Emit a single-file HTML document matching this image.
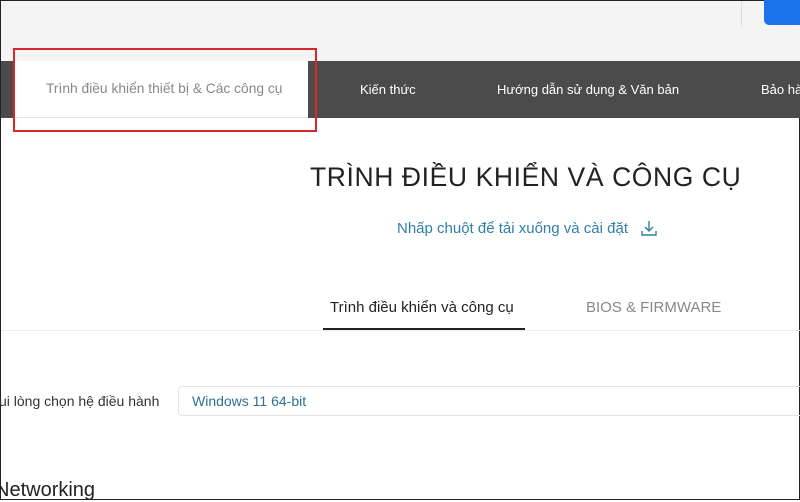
<!DOCTYPE html>
<html><head><meta charset="utf-8"><style>
*{margin:0;padding:0;box-sizing:border-box}
body{width:800px;height:500px;overflow:hidden;background:#fff;font-family:"Liberation Sans","DejaVu Sans",sans-serif;position:relative;border:1px solid #222}
.abs{position:absolute;white-space:nowrap}
</style></head><body>
<div class="abs" style="left:0;top:0;width:800px;height:60px;background:#f4f4f4"></div>
<div class="abs" style="left:740px;top:0;width:1px;height:25px;background:#ddd"></div>
<div class="abs" style="left:763px;top:-6px;width:40px;height:30px;background:#1a73e8;border-radius:5px"></div>
<div class="abs" style="left:0;top:60px;width:800px;height:57px;background:#4b4b4b"></div>
<div class="abs" style="left:12px;top:60px;width:295px;height:57px;background:#fff;border-bottom:1px solid #e6e6e6"></div>
<div class="abs" style="left:12px;top:47px;width:304px;height:84px;border:2px solid #d62828"></div>
<div class="abs" style="left:45px;top:80px;font-size:13.8px;color:#888">Trình điều khiển thiết bị &amp; Các công cụ</div>
<div class="abs" style="left:359px;top:81px;font-size:13px;color:#fff">Kiến thức</div>
<div class="abs" style="left:496px;top:81px;font-size:13px;color:#fff">Hướng dẫn sử dụng &amp; Văn bản</div>
<div class="abs" style="left:760px;top:81px;font-size:13px;color:#fff">Bảo hà</div>
<div class="abs" style="left:309px;top:161px;font-size:26.5px;color:#222;font-weight:300;letter-spacing:0.6px">TRÌNH ĐIỀU KHIỂN VÀ CÔNG CỤ</div>
<div class="abs" style="left:396px;top:219px;font-size:15px;color:#2f7fa8">Nhấp chuột để tải xuống và cài đặt</div>
<svg class="abs" style="left:639px;top:218px" width="18" height="18" viewBox="0 0 18 18" fill="none" stroke="#2f7fa8" stroke-width="1.4"><path d="M9 2v10M5 8l4 4 4-4M2 12v4h14v-4"/></svg>
<div class="abs" style="left:329px;top:298px;font-size:15px;color:#222">Trình điều khiển và công cụ</div>
<div class="abs" style="left:322px;top:327px;width:202px;height:2px;background:#222"></div>
<div class="abs" style="left:585px;top:298px;font-size:15px;color:#888">BIOS &amp; FIRMWARE</div>
<div class="abs" style="left:0;top:329px;width:800px;height:1px;background:#eee"></div>
<div class="abs" style="left:-2px;top:392px;font-size:14px;color:#333">ui lòng chọn hệ điều hành</div>
<div class="abs" style="left:177px;top:385px;width:640px;height:30px;border:1px solid #e4e4e4;border-radius:4px"></div>
<div class="abs" style="left:191px;top:392px;font-size:14px;color:#2f6f98">Windows 11 64-bit</div>
<div class="abs" style="left:-6px;top:478px;font-size:20px;color:#222">Networking</div>
</body></html>
